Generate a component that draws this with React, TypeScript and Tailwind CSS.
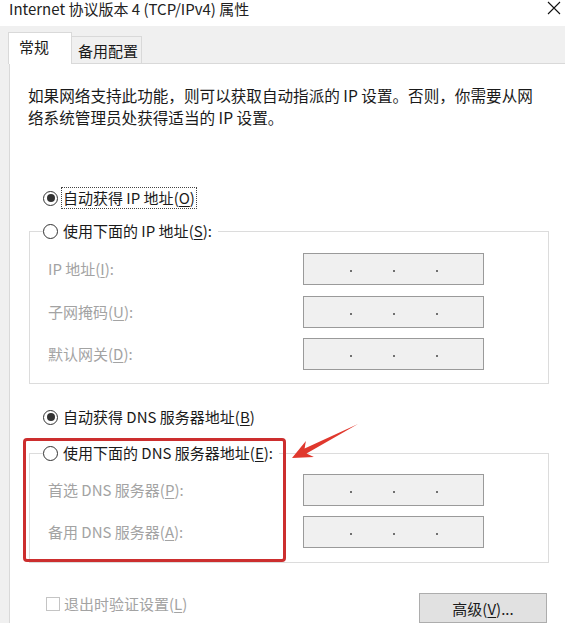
import React from "react";

const FONT = "font-['Noto_Sans_CJK_SC','Noto_Sans',sans-serif]";

function K({ k }: { k: string }) {
  return (
    <>
      (<span className="underline underline-offset-2">{k}</span>)
    </>
  );
}

function Radio({ checked }: { checked?: boolean }) {
  return (
    <span className="flex h-[15px] w-[15px] shrink-0 items-center justify-center rounded-full border border-[#333] bg-white">
      {checked && <span className="h-[8px] w-[8px] rounded-full bg-[#333]" />}
    </span>
  );
}

function IpBox() {
  return (
    <div className="flex h-[32px] w-[181px] items-center gap-[41px] border-[1.5px] border-[#9a9a9a] bg-[#f0f0f0] pl-[46px] pt-[4px]">
      <span className="h-[2px] w-[2px] bg-[#707070]" />
      <span className="h-[2px] w-[2px] bg-[#707070]" />
      <span className="h-[2px] w-[2px] bg-[#707070]" />
    </div>
  );
}

function Row({ label }: { label: React.ReactNode }) {
  return (
    <div className="flex items-center">
      <div className="w-[255px] text-[15px] leading-[20px] text-[#a3a3a3]">{label}</div>
      <IpBox />
    </div>
  );
}

export default function App() {
  return (
    <div className={`relative h-[623px] w-[565px] overflow-hidden bg-white ${FONT} text-[#1a1a1a]`}>
      {/* title bar */}
      <div className="flex h-[26px] items-start justify-between bg-white pl-[9px] pr-[4px]">
        <div className="mt-0 text-[15px] leading-[17px] text-[#222]">
          Internet 协议版本 4 (TCP/IPv4) 属性
        </div>
        <svg width="14" height="14" viewBox="0 0 14 14" className="mt-[1px]">
          <path d="M1 1 L13 13 M13 1 L1 13" stroke="#111" strokeWidth="1.1" />
        </svg>
      </div>

      {/* body */}
      <div className="flex h-[597px] flex-col bg-[#f0f0f0]">
        {/* tabs */}
        <div className="flex h-[42px] items-end pl-[8px]">
          <div className="relative z-10 -mb-px flex h-[32px] w-[64px] items-start border border-b-0 border-[#d9d9d9] bg-white pl-[10px] pt-[4px] text-[15px] leading-[20px] text-[#1a1a1a]">
            常规
          </div>
          <div className="flex h-[27px] w-[70px] items-center border border-b-0 border-l-0 border-[#d9d9d9] bg-[#f0f0f0] pl-[6px] pt-[2px] text-[15px] leading-[20px] text-[#1a1a1a]">
            备用配置
          </div>
        </div>

        {/* panel */}
        <div className="ml-[9px] flex flex-1 flex-col border-l border-t border-[#d9d9d9] bg-white pl-[18px]">
          <p className="mt-[21px] w-[514px] text-[15.6px] leading-[21.5px] text-[#1a1a1a]">
            如果网络支持此功能，则可以获取自动指派的 IP 设置。否则，你需要从网络系统管理员处获得适当的 IP 设置。
          </p>

          <div className="mt-[58px] flex h-[24px] items-center pl-[15px]">
            <Radio checked />
            <span className="ml-[3px] border border-dotted border-[#444] px-[1px] text-[15px] leading-[20px]">
              自动获得 IP 地址<K k="O" />
            </span>
          </div>

          <fieldset className="mt-[9px] ml-px w-[520px] border border-[#dcdcdc] pb-[13px]">
            <legend className="ml-[13px] flex h-[24px] items-center pr-[6px]">
              <Radio />
              <span className="ml-[5px] text-[15px] leading-[20px]">
                使用下面的 IP 地址<K k="S" />:
              </span>
            </legend>
            <div className="mt-[10px] flex flex-col gap-[10.5px] pl-[18px]">
              <Row label={<>IP 地址<K k="I" />:</>} />
              <Row label={<>子网掩码<K k="U" />:</>} />
              <Row label={<>默认网关<K k="D" />:</>} />
            </div>
          </fieldset>

          <div className="mt-[21px] flex h-[24px] items-center pl-[15px]">
            <Radio checked />
            <span className="ml-[5px] text-[15px] leading-[20px]">
              自动获得 DNS 服务器地址<K k="B" />
            </span>
          </div>

          <fieldset className="mt-[12px] ml-px w-[520px] border border-[#dcdcdc] pb-[14px]">
            <legend className="ml-[13px] flex h-[24px] items-center pr-[6px]">
              <Radio />
              <span className="ml-[5px] text-[15px] leading-[20px]">
                使用下面的 DNS 服务器地址<K k="E" />:
              </span>
            </legend>
            <div className="mt-[9px] flex flex-col gap-[10px] pl-[18px]">
              <Row label={<>首选 DNS 服务器<K k="P" />:</>} />
              <Row label={<>备用 DNS 服务器<K k="A" />:</>} />
            </div>
          </fieldset>

          <div className="mt-[30px] flex items-start">
            <div className="mt-[1px] flex h-[20px] items-center pl-[18px]">
              <span className="h-[14px] w-[14px] border border-[#c4c4c4] bg-white" />
              <span className="ml-[4px] text-[15px] leading-[20px] text-[#a3a3a3]">
                退出时验证设置<K k="L" />
              </span>
            </div>
            <div className="ml-auto mr-[18px] flex h-[30px] w-[128px] items-center justify-center border border-[#adadad] bg-[#e1e1e1] pt-[1px] text-[15px] leading-[20px] text-[#1a1a1a]">
              高级<K k="V" />...
            </div>
          </div>
        </div>
      </div>

      {/* annotation overlay */}
      <div className="absolute left-[23px] top-[438px] h-[124px] w-[263px] rounded-[4px] border-[3.5px] border-[#cc2e2e]" />
      <svg className="absolute left-0 top-0" width="565" height="623" viewBox="0 0 565 623">
        <polygon
          points="292,458 305.9,441.1 304.6,448.6 358,424 306.5,453.5 313.9,457.1"
          fill="#e0382d"
        />
      </svg>
    </div>
  );
}
